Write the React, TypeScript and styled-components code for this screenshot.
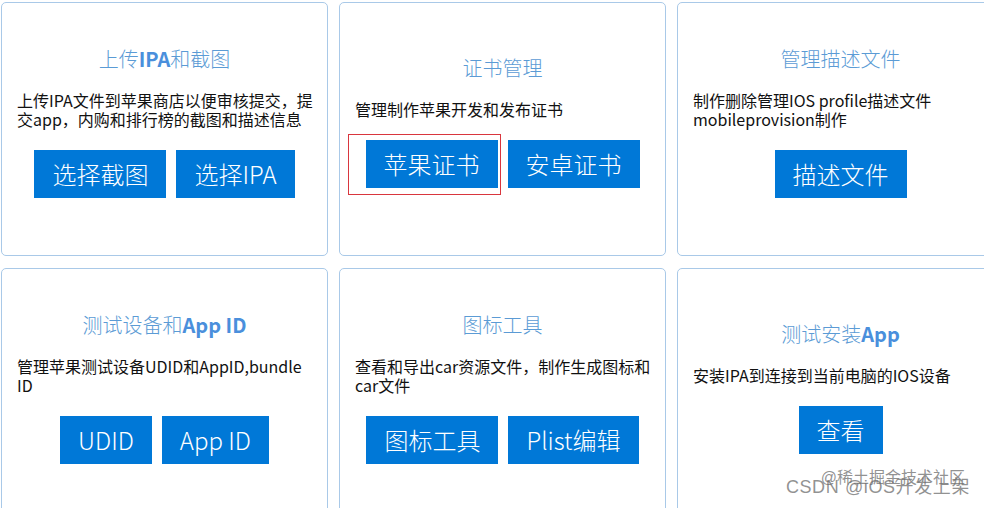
import React from "react";
import styled, { createGlobalStyle } from "styled-components";

const GlobalStyle = createGlobalStyle`
  html, body {
    margin: 0;
    padding: 0;
    overflow: hidden;
    background: #ffffff;
  }
  body {
    font-family: "Noto Sans CJK SC", sans-serif;
  }
`;

interface ToolCard {
  title: React.ReactNode;
  desc: React.ReactNode;
  buttons: string[];
  marked?: number; // 红框标注的按钮下标
}

const cards: ToolCard[] = [
  {
    title: (
      <>
        上传<b>IPA</b>和截图
      </>
    ),
    desc: "上传IPA文件到苹果商店以便审核提交，提交app，内购和排行榜的截图和描述信息",
    buttons: ["选择截图", "选择IPA"],
  },
  {
    title: "证书管理",
    desc: "管理制作苹果开发和发布证书",
    buttons: ["苹果证书", "安卓证书"],
    marked: 0,
  },
  {
    title: "管理描述文件",
    desc: "制作删除管理IOS profile描述文件 mobileprovision制作",
    buttons: ["描述文件"],
  },
  {
    title: (
      <>
        测试设备和<b>App ID</b>
      </>
    ),
    desc: "管理苹果测试设备UDID和AppID,bundle ID",
    buttons: ["UDID", "App ID"],
  },
  {
    title: "图标工具",
    desc: "查看和导出car资源文件，制作生成图标和car文件",
    buttons: ["图标工具", "Plist编辑"],
  },
  {
    title: (
      <>
        测试安装<b>App</b>
      </>
    ),
    desc: "安装IPA到连接到当前电脑的IOS设备",
    buttons: ["查看"],
  },
];

const App: React.FC = () => {
  return (
    <>
      <GlobalStyle />
      <Page>
        <Grid>
          {cards.map((card, i) => (
            <Card key={i}>
              <Title>{card.title}</Title>
              <Desc>{card.desc}</Desc>
              <Actions>
                {card.buttons.map((label, j) => (
                  <ButtonWrap key={label}>
                    <ActionButton>{label}</ActionButton>
                    {card.marked === j && <Marker />}
                  </ButtonWrap>
                ))}
              </Actions>
            </Card>
          ))}
        </Grid>
        <Watermark>
          <WatermarkLine $top={0} $right={19} $size={16} $spacing={0}>
            @稀土掘金技术社区
          </WatermarkLine>
          <WatermarkLine $top={9} $right={14} $size={18} $spacing={0.6}>
            CSDN @iOS开发上架
          </WatermarkLine>
        </Watermark>
      </Page>
    </>
  );
};

export default App;

const Page = styled.div`
  position: relative;
  width: 984px;
  height: 508px;
  overflow: hidden;
  padding: 2px 0 0 1px;
  box-sizing: border-box;
`;

const Grid = styled.div`
  display: grid;
  grid-template-columns: repeat(3, 327px);
  grid-auto-rows: 254px;
  column-gap: 11px;
  row-gap: 12px;
`;

const Card = styled.div`
  display: flex;
  flex-direction: column;
  justify-content: center;
  box-sizing: border-box;
  padding: 0 15px 16px;
  border: 1px solid #a9c9e8;
  border-radius: 5px;
  background: #ffffff;
`;

const Title = styled.div`
  font-size: 20px;
  font-weight: 300;
  line-height: 28px;
  color: #5b9bd5;
  text-align: center;
  margin-bottom: 18px;

  b {
    font-weight: 700;
    color: #4a8fdc;
  }
`;

const Desc = styled.p`
  margin: 0 -5px 0 0;
  font-size: 16px;
  line-height: 19px;
  color: #111111;
  word-break: break-word;
`;

const Actions = styled.div`
  display: flex;
  justify-content: center;
  gap: 10px;
  margin-top: 21px;
`;

const ButtonWrap = styled.div`
  position: relative;
`;

const ActionButton = styled.button`
  height: 48px;
  padding: 0 18px;
  border: none;
  border-radius: 0;
  background: #0078d7;
  color: #ffffff;
  font-family: "Noto Sans CJK SC", sans-serif;
  font-size: 24px;
  font-weight: 300;
  line-height: 48px;
  cursor: pointer;
`;

const Marker = styled.span`
  position: absolute;
  left: -18px;
  right: -3px;
  top: -6px;
  bottom: -7px;
  border: 1px solid #d9363e;
  pointer-events: none;
`;

const Watermark = styled.div`
  position: absolute;
  right: 0;
  bottom: 0;
  width: 200px;
  height: 40px;
  pointer-events: none;
`;

const WatermarkLine = styled.span<{
  $top: number;
  $right: number;
  $size: number;
  $spacing: number;
}>`
  position: absolute;
  top: ${(p) => p.$top}px;
  right: ${(p) => p.$right}px;
  font-family: "Liberation Sans", "Noto Sans CJK SC", sans-serif;
  font-size: ${(p) => p.$size}px;
  letter-spacing: ${(p) => p.$spacing}px;
  line-height: 1.2;
  color: rgba(110, 110, 110, 0.75);
  white-space: nowrap;
`;
